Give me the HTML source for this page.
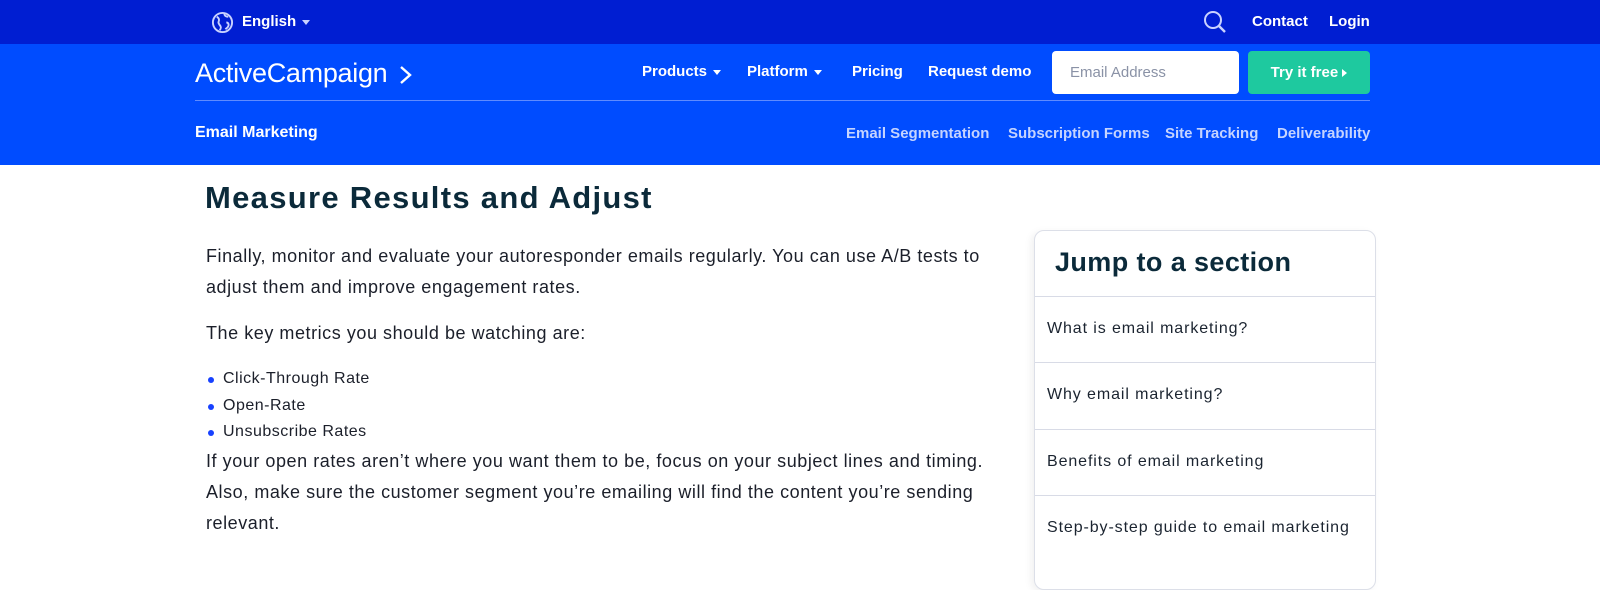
<!DOCTYPE html>
<html><head><meta charset="utf-8"><style>
*{margin:0;padding:0;box-sizing:border-box}
body{width:1600px;height:570px;overflow:hidden;background:#fff;font-family:"Liberation Sans",sans-serif;position:relative}
.a{position:absolute;white-space:nowrap}
.top{position:absolute;left:0;top:0;width:1600px;height:44px;background:#001ed2}
.nav{position:absolute;left:0;top:44px;width:1600px;height:121px;background:#004cff}
.w{color:#fff;font-weight:bold;font-size:15px}
.sub{color:#c5d4ff;font-weight:bold;font-size:15px}
.caret{display:inline-block;width:0;height:0;border-left:4px solid transparent;border-right:4px solid transparent;border-top:5px solid #fff;vertical-align:middle;margin-left:6px}
.p{color:#1b1f2a;font-size:18px;line-height:31px;letter-spacing:.55px}
.li{color:#1b1f2a;font-size:16px;letter-spacing:.5px}
.dot{position:absolute;width:6px;height:6px;border-radius:50%;background:#1741ff}
.card{position:absolute;left:1034px;top:230px;width:342px;height:360px;border:1px solid #dcdfe8;border-radius:10px;box-shadow:-3px 2px 8px rgba(0,0,0,.06);background:#fff}
.row{position:absolute;left:0;width:340px;border-top:1px solid #d8dbe6}
.rt{position:absolute;left:12px;font-size:16px;color:#1b2430;letter-spacing:.9px}
</style></head><body>
<div class="top"></div>
<div class="nav"></div>
<svg class="a" style="left:211px;top:11px" width="23" height="23" viewBox="0 0 24 24"><circle cx="12" cy="12" r="10" fill="none" stroke="#c9d2ff" stroke-width="2"/><path d="M6 6c2 1 3 3 2 5s1 3 2 5-1 4-1 4M14 3c0 2 2 3 4 3M16 12c2 0 3 2 2 4s-2 2-3 3" fill="none" stroke="#c9d2ff" stroke-width="2"/></svg>
<div class="a w" style="left:242px;top:13px">English<span class="caret" style="border-top-color:#c9d2ff"></span></div>
<svg class="a" style="left:1203px;top:10px" width="24" height="24" viewBox="0 0 24 24"><circle cx="10" cy="10" r="8" fill="none" stroke="#c9d2ff" stroke-width="2"/><path d="M16 16l6 6" stroke="#c9d2ff" stroke-width="2.4"/></svg>
<div class="a w" style="left:1252px;top:13px">Contact</div>
<div class="a w" style="left:1329px;top:13px">Login</div>
<div class="a" style="left:195px;top:58px;color:#fff;font-size:27px;letter-spacing:-.3px">ActiveCampaign</div>
<svg class="a" style="left:399px;top:65px" width="14" height="20" viewBox="0 0 14 20"><path d="M2 2l9 8-9 8" fill="none" stroke="#fff" stroke-width="2.4"/></svg>
<div class="a w" style="left:642px;top:63px">Products<span class="caret"></span></div>
<div class="a w" style="left:747px;top:63px">Platform<span class="caret"></span></div>
<div class="a w" style="left:852px;top:63px">Pricing</div>
<div class="a w" style="left:928px;top:63px">Request demo</div>
<div class="a" style="left:1052px;top:51px;width:187px;height:43px;background:#fff;border-radius:4px;color:#8a92a6;font-size:15px;padding:13px 0 0 18px">Email Address</div>
<div class="a w" style="left:1248px;top:51px;width:122px;height:43px;background:#1ec99f;border-radius:4px;padding-top:13px;text-align:center">Try it free <span style="display:inline-block;border-top:4px solid transparent;border-bottom:4px solid transparent;border-left:5px solid #fff"></span></div>
<div class="a" style="left:195px;top:100px;width:1175px;height:1px;background:#5f8bff"></div>
<div class="a w" style="left:195px;top:124px;font-size:16px">Email Marketing</div>
<div class="a sub" style="left:846px;top:125px">Email Segmentation</div>
<div class="a sub" style="left:1008px;top:125px">Subscription Forms</div>
<div class="a sub" style="left:1165px;top:125px">Site Tracking</div>
<div class="a sub" style="left:1277px;top:125px">Deliverability</div>
<div class="a" style="left:205px;top:180px;font-size:31px;font-weight:bold;color:#0b2a3a;letter-spacing:1.3px">Measure Results and Adjust</div>
<div class="a p" style="left:206px;top:241px">Finally, monitor and evaluate your autoresponder emails regularly. You can use A/B tests to<br>adjust them and improve engagement rates.</div>
<div class="a p" style="left:206px;top:318px">The key metrics you should be watching are:</div>
<div class="dot" style="left:208px;top:377px"></div><div class="a li" style="left:223px;top:370px">Click-Through Rate</div>
<div class="dot" style="left:208px;top:404px"></div><div class="a li" style="left:223px;top:397px">Open-Rate</div>
<div class="dot" style="left:208px;top:430px"></div><div class="a li" style="left:223px;top:423px">Unsubscribe Rates</div>
<div class="a p" style="left:206px;top:446px">If your open rates aren’t where you want them to be, focus on your subject lines and timing.<br>Also, make sure the customer segment you’re emailing will find the content you’re sending<br>relevant.</div>
<div class="card">
<div class="a" style="left:20px;top:16px;font-size:27px;font-weight:bold;color:#0b2a3a;letter-spacing:.4px">Jump to a section</div>
<div class="row" style="top:65px"></div><div class="rt" style="top:89px">What is email marketing?</div>
<div class="row" style="top:131px"></div><div class="rt" style="top:155px">Why email marketing?</div>
<div class="row" style="top:198px"></div><div class="rt" style="top:222px">Benefits of email marketing</div>
<div class="row" style="top:264px"></div><div class="rt" style="top:288px">Step-by-step guide to email marketing</div>
</div>
</body></html>
